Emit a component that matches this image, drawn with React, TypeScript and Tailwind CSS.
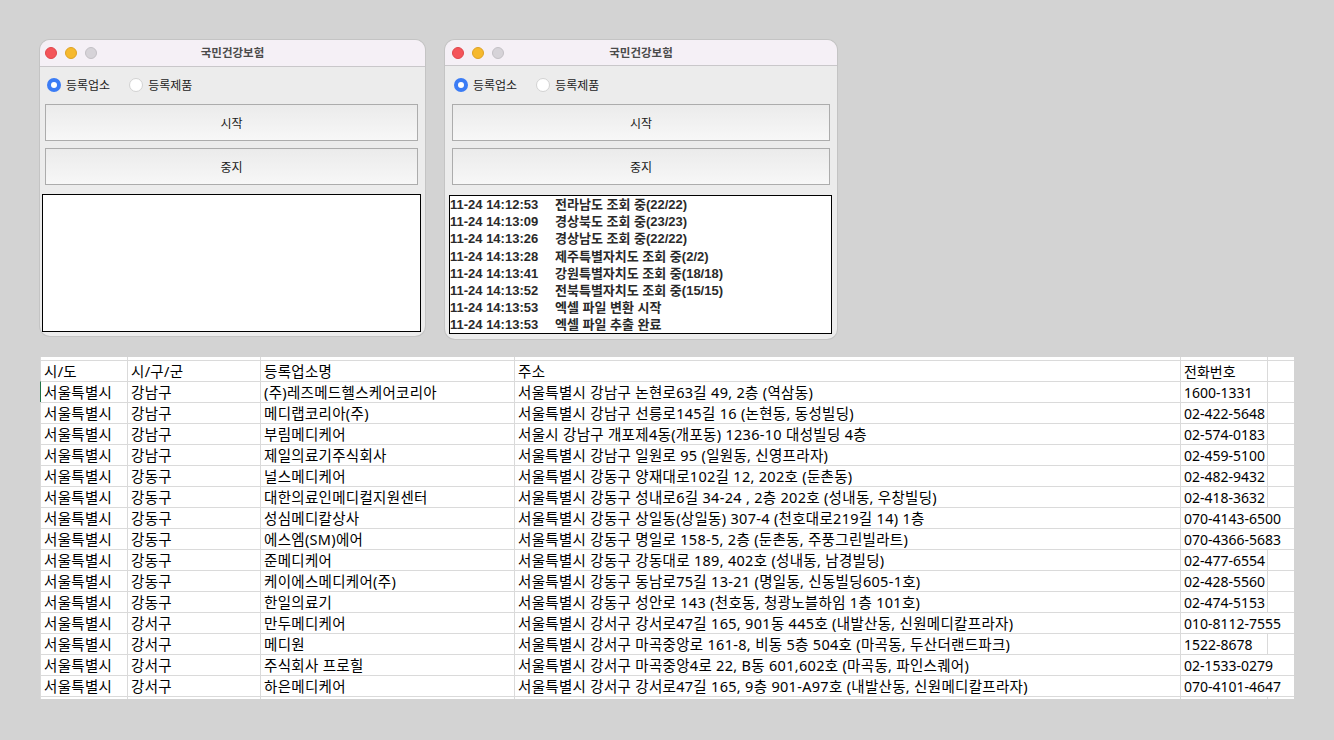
import React from "react";

const rows: string[][] = [
  ["서울특별시", "강남구", "(주)레즈메드헬스케어코리아", "서울특별시 강남구 논현로63길 49, 2층 (역삼동)", "1600-1331"],
  ["서울특별시", "강남구", "메디랩코리아(주)", "서울특별시 강남구 선릉로145길 16 (논현동, 동성빌딩)", "02-422-5648"],
  ["서울특별시", "강남구", "부림메디케어", "서울시 강남구 개포제4동(개포동) 1236-10 대성빌딩 4층", "02-574-0183"],
  ["서울특별시", "강남구", "제일의료기주식회사", "서울특별시 강남구 일원로 95 (일원동, 신영프라자)", "02-459-5100"],
  ["서울특별시", "강동구", "널스메디케어", "서울특별시 강동구 양재대로102길 12, 202호 (둔촌동)", "02-482-9432"],
  ["서울특별시", "강동구", "대한의료인메디컬지원센터", "서울특별시 강동구 성내로6길 34-24 , 2층 202호 (성내동, 우창빌딩)", "02-418-3632"],
  ["서울특별시", "강동구", "성심메디칼상사", "서울특별시 강동구 상일동(상일동) 307-4 (천호대로219길 14) 1층", "070-4143-6500"],
  ["서울특별시", "강동구", "에스엠(SM)에어", "서울특별시 강동구 명일로 158-5, 2층 (둔촌동, 주풍그린빌라트)", "070-4366-5683"],
  ["서울특별시", "강동구", "준메디케어", "서울특별시 강동구 강동대로 189, 402호 (성내동, 남경빌딩)", "02-477-6554"],
  ["서울특별시", "강동구", "케이에스메디케어(주)", "서울특별시 강동구 동남로75길 13-21 (명일동, 신동빌딩605-1호)", "02-428-5560"],
  ["서울특별시", "강동구", "한일의료기", "서울특별시 강동구 성안로 143 (천호동, 청광노블하임 1층 101호)", "02-474-5153"],
  ["서울특별시", "강서구", "만두메디케어", "서울특별시 강서구 강서로47길 165, 901동 445호 (내발산동, 신원메디칼프라자)", "010-8112-7555"],
  ["서울특별시", "강서구", "메디원", "서울특별시 강서구 마곡중앙로 161-8, 비동 5층 504호 (마곡동, 두산더랜드파크)", "1522-8678"],
  ["서울특별시", "강서구", "주식회사 프로힐", "서울특별시 강서구 마곡중앙4로 22, B동 601,602호 (마곡동, 파인스퀘어)", "02-1533-0279"],
  ["서울특별시", "강서구", "하은메디케어", "서울특별시 강서구 강서로47길 165, 9층 901-A97호 (내발산동, 신원메디칼프라자)", "070-4101-4647"],
];

const logs = [
  ["11-24 14:12:53", "전라남도 조회 중(22/22)"],
  ["11-24 14:13:09", "경상북도 조회 중(23/23)"],
  ["11-24 14:13:26", "경상남도 조회 중(22/22)"],
  ["11-24 14:13:28", "제주특별자치도 조회 중(2/2)"],
  ["11-24 14:13:41", "강원특별자치도 조회 중(18/18)"],
  ["11-24 14:13:52", "전북특별자치도 조회 중(15/15)"],
  ["11-24 14:13:53", "엑셀 파일 변환 시작"],
  ["11-24 14:13:53", "엑셀 파일 추출 완료"],
];

const ui = { fontFamily: '"Noto Sans CJK KR", "Noto Sans", sans-serif' };
const sheet = { fontFamily: '"Noto Sans", "Noto Sans CJK KR", sans-serif' };
const logFont = { fontFamily: '"Liberation Sans", "Noto Sans CJK KR", sans-serif' };

const TitleBar = ({ pad }: { pad: string }) => (
  <div className={`relative flex items-center bg-[#f5f0f6] border-b border-[#c9c7ca] rounded-t-[10px] ${pad}`}>
    <div className="flex items-center gap-2">
      <span className="w-3 h-3 rounded-full bg-[#f4545a] border border-[#e0454b]" />
      <span className="w-3 h-3 rounded-full bg-[#f6b92e] border border-[#dea224]" />
      <span className="w-3 h-3 rounded-full bg-[#d6d3d8] border border-[#c3c0c5]" />
    </div>
    <div className="absolute inset-0 flex items-center justify-center text-[11.5px] font-semibold text-[#4b4b4b]">
      국민건강보험
    </div>
  </div>
);

const Radios = ({ gap }: { gap: string }) => (
  <div className={`flex items-center h-[18px] text-[12px] text-[#1c1c1c] ${gap}`}>
    <div className="flex items-center gap-[5px]">
      <span className="w-[14px] h-[14px] rounded-full bg-[#3b7cf5] flex items-center justify-center">
        <span className="w-[6px] h-[6px] rounded-full bg-white" />
      </span>
      <span>등록업소</span>
    </div>
    <div className="flex items-center gap-[5px]">
      <span className="w-[14px] h-[14px] rounded-full bg-white border border-[#d2d2d2]" />
      <span>등록제품</span>
    </div>
  </div>
);

const Btn = ({ label, cls }: { label: string; cls: string }) => (
  <button
    type="button"
    className={`h-[37px] border border-[#acacac] bg-gradient-to-b from-[#ebebeb] to-[#f7f7f7] text-[12px] text-[#1a1a1a] flex items-center justify-center ${cls}`}
  >
    {label}
  </button>
);

const Cell = ({ w, children, last }: { w: string; children?: React.ReactNode; last?: boolean }) => (
  <div
    className={`${w} shrink-0 h-full pl-[3px] overflow-hidden whitespace-nowrap leading-[20px] ${
      last ? "" : "border-r border-[#dadada]"
    }`}
  >
    {children}
  </div>
);

const Phone = ({ children }: { children: React.ReactNode }) => (
  <span className="text-[14px] tracking-normal">{children}</span>
);

const Row = ({ r, green }: { r: string[]; green?: boolean }) => {
  const long = r[4].length > 11;
  return (
    <div className={`flex h-[21px] border-t border-[#dadada] border-l ${green ? "border-l-[#217346]" : ""}`}>
      <Cell w="w-[87px]">{r[0]}</Cell>
      <Cell w="w-[133px]">{r[1]}</Cell>
      <Cell w="w-[254px]">{r[2]}</Cell>
      <Cell w="w-[666px]">{r[3]}</Cell>
      {long ? (
        <Cell w="w-[113px]" last>
          <Phone>{r[4]}</Phone>
        </Cell>
      ) : (
        <>
          <Cell w="w-[87px]">
            <Phone>{r[4]}</Phone>
          </Cell>
          <Cell w="w-[26px]" last />
        </>
      )}
    </div>
  );
};

const Strip = ({ top }: { top?: boolean }) => (
  <div className={`flex h-[3px] border-l border-[#dadada] ${top ? "" : "border-t"}`}>
    <Cell w="w-[87px]" />
    <Cell w="w-[133px]" />
    <Cell w="w-[254px]" />
    <Cell w="w-[666px]" />
    <Cell w="w-[87px]" />
    <Cell w="w-[26px]" last />
  </div>
);

export default function App() {
  return (
    <div className="w-[1334px] h-[740px] bg-[#d3d3d3] pt-[40px] pl-[40px] overflow-hidden" style={ui}>
      <div className="flex items-start gap-[20px]">
        {/* window 1 */}
        <div className="w-[385px] h-[296px] flex flex-col bg-[#ececec] rounded-[10px] shadow-[0_0_0_1px_#c4c4c4]">
          <TitleBar pad="h-[27px] pl-[5px]" />
          <div className="pl-[7px] pt-[9px]">
            <Radios gap="gap-[19px]" />
          </div>
          <Btn label="시작" cls="mt-[10px] ml-[5px] w-[373px]" />
          <Btn label="중지" cls="mt-[7px] ml-[5px] w-[373px]" />
          <div className="mt-[9px] ml-[2px] w-[379px] h-[138px] bg-white border border-black" />
        </div>

        {/* window 2 */}
        <div className="w-[392px] h-[299px] flex flex-col bg-[#ececec] rounded-[10px] shadow-[0_0_0_1px_#c4c4c4]">
          <TitleBar pad="h-[26px] pl-[7px]" />
          <div className="pl-[9px] pt-[10px]">
            <Radios gap="gap-[19px]" />
          </div>
          <Btn label="시작" cls="mt-[10px] ml-[7px] w-[378px]" />
          <Btn label="중지" cls="mt-[7px] ml-[7px] w-[378px]" />
          <div
            className="mt-[10px] ml-[4px] w-[383px] h-[139px] bg-white border border-black overflow-hidden text-[13px] font-semibold text-[#2a2a2a] leading-[17.2px]"
            style={logFont}
          >
            {logs.map(([t, m], i) => (
              <div key={i} className="flex whitespace-nowrap">
                <span className="w-[105px] shrink-0">{t}</span>
                <span>{m}</span>
              </div>
            ))}
          </div>
        </div>
      </div>

      {/* sheet */}
      <div
        className="mt-[18px] w-[1254px] bg-white text-[14.5px] tracking-[0.3px] text-black"
        style={sheet}
      >
        <Strip top />
        <Row r={["시/도", "시/구/군", "등록업소명", "주소", "전화번호"]} />
        {rows.map((r, i) => (
          <Row key={i} r={r} green={i === 0} />
        ))}
        <Strip />
      </div>
    </div>
  );
}
